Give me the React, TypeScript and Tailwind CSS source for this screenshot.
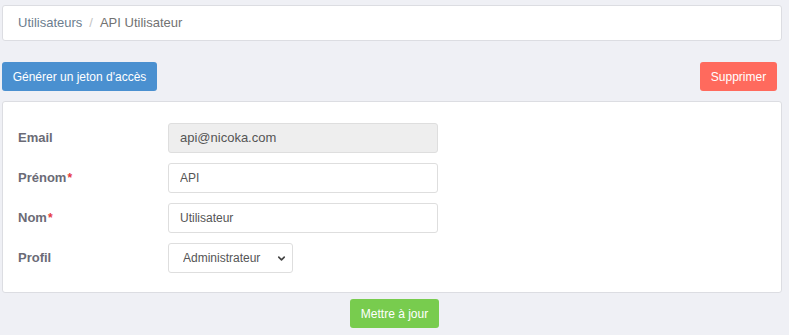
import { ChevronDown } from "lucide-react";

type FieldProps = {
  label: string;
  required?: boolean;
  children: React.ReactNode;
};

function Field({ label, required, children }: FieldProps) {
  return (
    <div className="flex items-center">
      <label className="w-[150px] shrink-0 text-[13px] font-bold text-[#6b6b76]">
        {label}
        {required && <span className="ml-[1px] text-[12px] text-[#e5393f]">*</span>}
      </label>
      {children}
    </div>
  );
}

export default function App() {
  return (
    <div
      className="min-h-screen bg-[#eff0f5] pl-[2px] pr-[7px] pt-[5px] text-[13px]"
      style={{ fontFamily: '"Liberation Sans", Arial, sans-serif' }}
    >
      <nav className="flex h-[36px] items-center rounded-[3px] border border-[#dcdde2] bg-white px-[15px]">
        <a href="#" className="text-[#6c7d8e]">Utilisateurs</a>
        <span className="mx-[7px] text-[#c4c4c4]">/</span>
        <span className="text-[#727272]">API Utilisateur</span>
      </nav>

      <div className="mt-[21px] flex items-center justify-between pr-[5px]">
        <button className="h-[29px] w-[155px] rounded-[3px] bg-[#4a90d0] text-[12px] text-white">
          Générer un jeton d'accès
        </button>
        <button className="h-[29px] w-[77px] rounded-[3px] bg-[#ff6a5d] text-[12px] text-white">
          Supprimer
        </button>
      </div>

      <div className="mt-[10px] flex flex-col gap-[10px] rounded-[3px] border border-[#dcdde2] bg-white pb-[19px] pl-[15px] pt-[21px]">
        <Field label="Email">
          <div className="flex h-[30px] w-[270px] items-center rounded-[3px] border border-[#dedede] bg-[#eeeeee] px-[11px] text-[13px] text-[#555]">
            api@nicoka.com
          </div>
        </Field>
        <Field label="Prénom" required>
          <input
            defaultValue="API"
            className="h-[30px] w-[270px] rounded-[3px] border border-[#dedede] px-[11px] text-[12px] text-[#555] outline-none"
          />
        </Field>
        <Field label="Nom" required>
          <input
            defaultValue="Utilisateur"
            className="h-[30px] w-[270px] rounded-[3px] border border-[#dedede] px-[11px] text-[12px] text-[#555] outline-none"
          />
        </Field>
        <Field label="Profil">
          <div className="relative h-[30px] w-[125px]">
            <select
              defaultValue="admin"
              className="h-full w-full appearance-none rounded-[3px] border border-[#dedede] bg-white pl-[14px] text-[12px] text-[#555] outline-none"
            >
              <option value="admin">Administrateur</option>
            </select>
            <ChevronDown
              size={11}
              strokeWidth={3.5}
              className="pointer-events-none absolute right-[6px] top-[10px] text-[#444]"
            />
          </div>
        </Field>
      </div>

      <div className="mt-[6px] flex justify-center pl-[5px]">
        <button className="h-[29px] w-[89px] rounded-[3px] bg-[#78cc4e] text-[12px] text-white">
          Mettre à jour
        </button>
      </div>
    </div>
  );
}
